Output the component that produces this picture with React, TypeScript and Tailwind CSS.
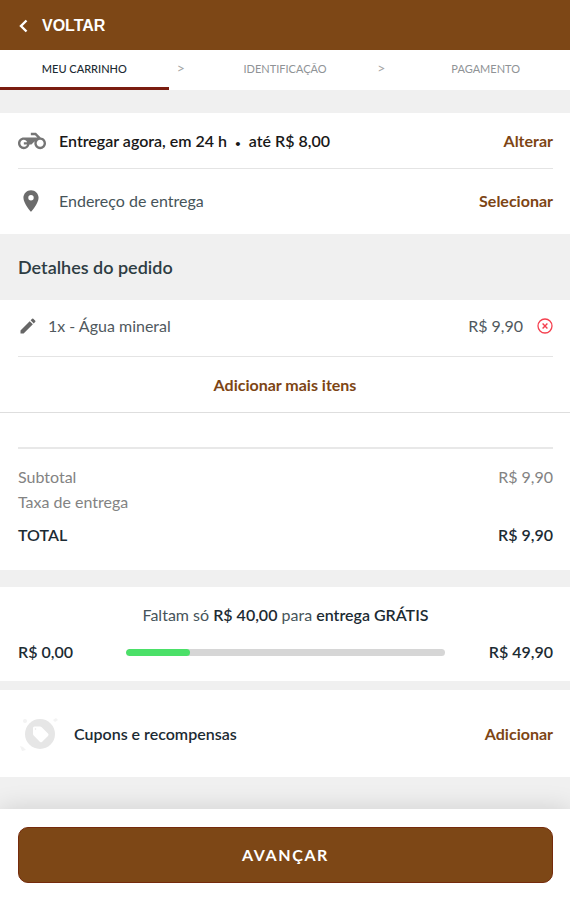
import type { ReactNode } from "react";
import { MdEdit, MdPlace } from "react-icons/md";

const action = "font-bold text-[#7d4514]";

function Step({ children, active = false }: { children: ReactNode; active?: boolean }) {
  return (
    <li
      aria-current={active ? "step" : undefined}
      className={
        active
          ? "flex flex-1 items-center justify-center border-b-3 border-[#7a1d10] font-medium text-[#1c2b33]"
          : "flex flex-1 items-center justify-center border-b-3 border-transparent text-[#8f9396]"
      }
    >
      {children}
    </li>
  );
}

function StepArrow() {
  return (
    <li aria-hidden="true" className="w-8 pt-2 pl-2 text-sm leading-5 text-[#a5a5a5]">
      &gt;
    </li>
  );
}

function MotorcycleIcon() {
  return (
    <svg viewBox="0 0 24 24" className="size-7 text-[#757575]" fill="currentColor" aria-hidden="true">
      <path d="M19.44 9.03L15.41 5H11v2h3.590l2 2H5c-2.800 0-5 2.200-5 5s2.200 5 5 5c2.460 0 4.450-1.690 4.900-4h1.650l2.770-2.770c-.21.54-.32 1.140-.32 1.770 0 2.800 2.200 5 5 5s5-2.200 5-5c0-2.650-1.970-4.770-4.560-4.970zM7.820 15C7.400 16.150 6.280 17 5 17c-1.630 0-3-1.370-3-3s1.370-3 3-3c1.280 0 2.400.85 2.820 2H5v2h2.820zM19 17c-1.660 0-3-1.340-3-3s1.340-3 3-3 3 1.340 3 3-1.340 3-3 3z" />
    </svg>
  );
}

function RemoveIcon() {
  return (
    <svg viewBox="0 0 16 16" className="size-4" fill="none" stroke="#f5404f" aria-hidden="true">
      <circle cx="8" cy="8" r="7" strokeWidth="1.3" />
      <path d="M5.6 5.6l4.8 4.8M10.4 5.6l-4.8 4.8" strokeWidth="1.4" />
    </svg>
  );
}

function CouponIcon() {
  return (
    <svg viewBox="0 0 40 36" className="h-9 w-10" aria-hidden="true">
      <circle cx="22" cy="18" r="15" fill="#e6e6e6" />
      <path
        d="M15 12q0-1.500 1.500-1.500h5.500q1 0 1.700.7l6.300 6.300q1.200 1.200 0 2.400l-5.800 5.800q-1.200 1.200-2.400 0l-6.100-6.200q-.7-.7-.7-1.700z"
        fill="#fff"
      />
      <circle cx="17.500" cy="13" r="0.800" fill="#e6e6e6" />
      <g fill="#f3f3f3">
        <circle cx="7" cy="5" r="2" />
        <path d="M35 4l3-2 2 2-3 2z" />
        <path d="M2 30l3 1 3 3-4 1z" />
      </g>
    </svg>
  );
}

export default function App() {
  return (
    <div className="flex min-h-screen flex-col bg-[#f0f0f0] font-[Lato,sans-serif] text-base leading-6 text-[#1c2b33]">
      <header className="flex h-[50px] items-center bg-[#7d4716] px-[18px] pt-[2px]">
        <button
          type="button"
          className="flex items-center gap-3 font-['Liberation_Sans',sans-serif] font-bold text-white"
        >
          <svg viewBox="0 0 12 16" className="h-4 w-3" fill="none" stroke="currentColor" strokeWidth="2.4" aria-hidden="true">
            <path d="M8.5 2.5L3 8l5.5 5.5" />
          </svg>
          VOLTAR
        </button>
      </header>

      <nav aria-label="Etapas do pedido">
        <ol className="flex h-10 bg-white text-[11px]">
          <Step active>MEU CARRINHO</Step>
          <StepArrow />
          <Step>IDENTIFICAÇÃO</Step>
          <StepArrow />
          <Step>PAGAMENTO</Step>
        </ol>
      </nav>

      <main>
        <section aria-label="Entrega" className="mt-[23px] bg-white pr-[17px] pl-[18px]">
          <div className="flex h-14 items-center border-b border-[#e4e4e4]">
            <MotorcycleIcon />
            <p className="ml-[13px] flex-1 font-semibold text-[#181818]">
              Entregar agora, em 24 h <span className="mx-1 text-[10px] leading-none">•</span> até R$ 8,00
            </p>
            <button type="button" className={action}>Alterar</button>
          </div>
          <div className="flex h-[65px] items-center pb-[2px]">
            <MdPlace className="mr-[2px] size-[26px] text-[#6b6b6b]" aria-hidden="true" />
            <p className="ml-[13px] flex-1 text-[#46545a]">Endereço de entrega</p>
            <button type="button" className={action}>Selecionar</button>
          </div>
        </section>

        <h2 className="flex h-[66px] items-center px-[18px] text-lg font-semibold text-[#2e3d43]">
          Detalhes do pedido
        </h2>

        <section aria-label="Itens" className="bg-white">
          <div className="pr-[17px] pl-[18px]">
            <div className="flex h-[57px] items-center border-b border-[#e4e4e4] pb-1 text-[#50595e]">
              <button type="button" aria-label="Editar item">
                <MdEdit className="size-5 text-[#666]" aria-hidden="true" />
              </button>
              <p className="ml-[10px] flex-1">1x - Água mineral</p>
              <p>R$ 9,90</p>
              <button type="button" aria-label="Remover item" className="ml-[14px]">
                <RemoveIcon />
              </button>
            </div>
          </div>
          <div className="flex h-14 items-center justify-center border-b border-[#dedede]">
            <button type="button" className={action}>Adicionar mais itens</button>
          </div>
          <div className="pt-[34px] pr-[17px] pb-[23px] pl-[18px]">
            <dl className="border-t-2 border-[#e8e8e8] pt-[15px] leading-[25px]">
              <div className="flex justify-between text-[#838383]">
                <dt>Subtotal</dt>
                <dd>R$ 9,90</dd>
              </div>
              <div className="flex text-[#838383]">
                <dt>Taxa de entrega</dt>
              </div>
              <div className="mt-2 flex justify-between font-semibold">
                <dt>TOTAL</dt>
                <dd>R$ 9,90</dd>
              </div>
            </dl>
          </div>
        </section>

        <section aria-label="Entrega grátis" className="mt-[17px] h-[94px] bg-white pt-4 pr-[17px] pl-[18px]">
          <p className="text-center text-[#46545a]">
            Faltam só <span className="font-semibold text-[#1c2b33]">R$ 40,00</span> para{" "}
            <span className="font-semibold text-[#1c2b33]">entrega GRÁTIS</span>
          </p>
          <div className="mt-[13px] flex items-center font-semibold">
            <span className="w-[108px]">R$ 0,00</span>
            <div
              role="progressbar"
              aria-label="Progresso para entrega grátis"
              aria-valuenow={990}
              aria-valuemax={4990}
              className="h-[7px] flex-1 overflow-hidden rounded-full bg-[#d6d6d6]"
            >
              <div className="h-full w-1/5 rounded-full bg-[#4be068]" />
            </div>
            <span className="w-[108px] text-right">R$ 49,90</span>
          </div>
        </section>

        <section aria-label="Cupons" className="mt-[9px] flex h-[87px] items-center bg-white pr-[17px] pl-[18px]">
          <CouponIcon />
          <p className="ml-4 flex-1 font-semibold">Cupons e recompensas</p>
          <button type="button" className={action}>Adicionar</button>
        </section>
      </main>

      <footer className="mt-8 flex-1 bg-white pt-[18px] pr-[17px] pb-[17px] pl-[18px] shadow-[0_0_24px_rgba(0,0,0,0.14)]">
        <button
          type="button"
          className="h-14 w-full rounded-[10px] border border-[#752b0c] bg-[#7d4716] text-base font-bold tracking-widest text-white"
        >
          AVANÇAR
        </button>
      </footer>
    </div>
  );
}
